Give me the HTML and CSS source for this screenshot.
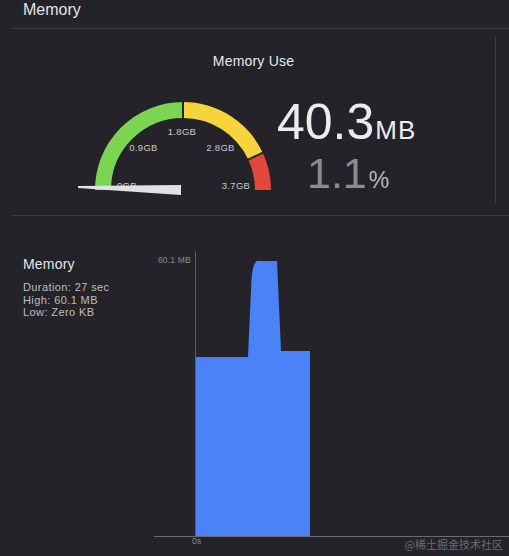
FILE: index.html
```html
<!DOCTYPE html>
<html>
<head>
<meta charset="utf-8">
<link rel="stylesheet" href="styles.css">
</head>
<body>
<div class="page">
  <header class="header">Memory</header>
  <section class="top">
    <div class="main">
      <div class="use-title">Memory Use</div>
      <div class="gauge-row">
        <svg class="gauge" width="200" height="105" viewBox="0 0 200 105">
          <path d="M27,95 A80,80 0 0 1 107,15" fill="none" stroke="#7bd553" stroke-width="16"/>
          <path d="M107,15 A80,80 0 0 1 179.5,61.19" fill="none" stroke="#f7d43b" stroke-width="16"/>
          <path d="M179.5,61.19 A80,80 0 0 1 187,95" fill="none" stroke="#e4473c" stroke-width="16"/>
          <line x1="107" y1="5" x2="107" y2="25" stroke="#242329" stroke-width="2"/>
          <line x1="170.44" y1="65.42" x2="188.57" y2="56.96" stroke="#242329" stroke-width="2"/>
          <g class="glabel">
            <text x="106" y="40">1.8GB</text>
            <text x="67.5" y="56">0.9GB</text>
            <text x="144.5" y="56">2.8GB</text>
            <text x="51" y="94">0GB</text>
            <text x="160" y="94">3.7GB</text>
          </g>
          <polygon points="2,91 105,90 105,100 2,93" fill="#e2e2e2"/>
        </svg>
        <div class="numbers">
          <div class="big"><span class="big-num">40.3</span><span class="big-unit">MB</span></div>
          <div class="pct"><span class="pct-num">1.1</span><span class="pct-unit">%</span></div>
        </div>
      </div>
    </div>
    <div class="vdivider"></div>
  </section>
  <section class="bottom">
    <div class="info">
      <div class="info-title">Memory</div>
      <div class="info-line">Duration: 27 sec</div>
      <div class="info-line">High: 60.1 MB</div>
      <div class="info-line">Low: Zero KB</div>
    </div>
    <svg class="chart" width="355" height="306" viewBox="0 0 355 306">
      <text class="axis-label" x="37" y="14" text-anchor="end">60.1 MB</text>
      <path d="M42,108 L94,108 L97.5,30 Q99,12 104,12 L123,12 L127,102 L156,102 L156,287 L42,287 Z" fill="#4c82f7"/>
      <line x1="41.5" y1="2" x2="41.5" y2="288" stroke="#5e5e63" stroke-width="1"/>
      <line x1="0" y1="287.5" x2="355" y2="287.5" stroke="#6a6a6f" stroke-width="1"/>
      <text class="axis-label" x="38" y="295">0s</text>
    </svg>
  </section>
  <div class="watermark">@稀土掘金技术社区</div>
</div>
</body>
</html>
```

FILE: styles.css
```css
html, body {
  margin: 0;
  padding: 0;
  background: #242329;
}
body {
  width: 509px;
  height: 556px;
  overflow: hidden;
  font-family: "Liberation Sans", Arial, sans-serif;
  color: #e6e6e6;
}
.page {
  position: relative;
  width: 509px;
  height: 556px;
}
.header {
  margin-left: 12px;
  padding: 0 0 8px 11px;
  font-size: 16px;
  line-height: 20px;
  color: #e4e4e4;
  border-bottom: 1px solid #3a3a3f;
}
.top {
  margin-left: 12px;
  display: flex;
  border-bottom: 1px solid #3b3b40;
  height: 187px;
  box-sizing: border-box;
}
.main {
  flex: 1;
  display: flex;
  flex-direction: column;
  padding-top: 24px;
}
.use-title {
  text-align: center;
  font-size: 14px;
  line-height: 16px;
  color: #e8e8e8;
  letter-spacing: 0.2px;
}
.gauge-row {
  display: flex;
  margin-top: 26px;
  padding-left: 64px;
}
.gauge {
  display: block;
  flex: none;
}
.glabel text {
  font-family: "Liberation Sans", Arial, sans-serif;
  font-size: 9.5px;
  letter-spacing: 0.3px;
  fill: #c9c9cb;
  text-anchor: middle;
}
.numbers {
  margin-left: 1px;
  padding-top: 2px;
}
.big {
  line-height: 50px;
  height: 50px;
  white-space: nowrap;
}
.big-num {
  font-size: 50px;
  color: #ececec;
}
.big-unit {
  font-size: 26px;
  letter-spacing: 1px;
  color: #ececec;
  margin-left: 1px;
}
.pct {
  margin-top: 5px;
  margin-left: 30px;
  line-height: 43px;
  height: 43px;
  white-space: nowrap;
}
.pct-num {
  font-size: 43px;
  color: #8b8b90;
}
.pct-unit {
  font-size: 23px;
  color: #b8b8bc;
  margin-left: 2px;
}
.vdivider {
  width: 1px;
  background: #3a3a3f;
  margin: 8px 13px 11px 0;
}
.bottom {
  display: flex;
}
.info {
  width: 131px;
  padding-left: 23px;
  padding-top: 39px;
}
.info-title {
  font-size: 14px;
  line-height: 18px;
  color: #e6e6e6;
  margin-bottom: 8px;
  letter-spacing: 0.2px;
}
.info-line {
  font-size: 11px;
  line-height: 12.5px;
  color: #bdbdc0;
  white-space: nowrap;
  letter-spacing: 0.4px;
}
.chart {
  display: block;
  margin-top: 33px;
  flex: none;
}
.axis-label {
  font-family: "Liberation Sans", Arial, sans-serif;
  font-size: 8.5px;
  letter-spacing: 0.2px;
  fill: #8a8a8f;
}
.watermark {
  position: absolute;
  right: 6px;
  bottom: 5px;
  font-family: "Noto Sans CJK SC", "Liberation Sans", sans-serif;
  font-size: 11px;
  line-height: 14px;
  color: rgba(200, 200, 205, 0.45);
}
```
